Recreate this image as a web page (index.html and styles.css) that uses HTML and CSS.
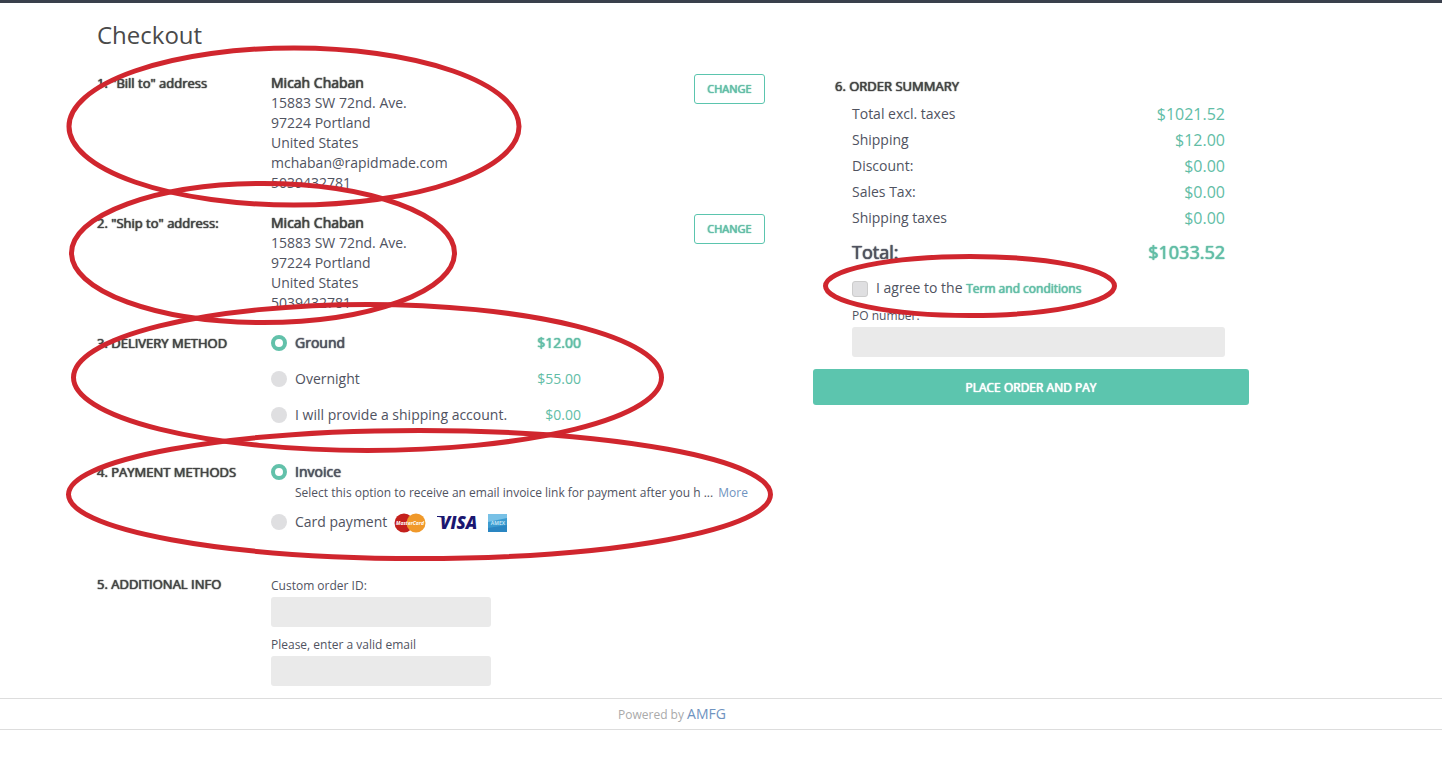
FILE: index.html
```
<!doctype html>
<html lang="en">
<head>
<meta charset="utf-8">
<meta name="viewport" content="width=device-width, initial-scale=1">
<title>Checkout</title>
<link rel="stylesheet" href="styles.css">
</head>

<body>
<form class="wrap">
	<h1>Checkout</h1>
	<div class="columns">
		<div class="steps">
			<section class="step bill">
				<h2>1. "Bill to" address</h2>
				<address>
					<strong>Micah Chaban</strong><br>
					15883 SW 72nd. Ave.<br>
					97224 Portland<br>
					United States<br>
					mchaban@rapidmade.com<br>
					5039432781
				</address>
				<button type="button" class="change">CHANGE</button>
			</section>
			<section class="step ship">
				<h2>2. "Ship to" address:</h2>
				<address>
					<strong>Micah Chaban</strong><br>
					15883 SW 72nd. Ave.<br>
					97224 Portland<br>
					United States<br>
					5039432781
				</address>
				<button type="button" class="change">CHANGE</button>
			</section>
			<section class="step delivery">
				<h2>3. DELIVERY METHOD</h2>
				<div class="options">
					<label class="option active"><input type="radio" name="delivery" checked><span>Ground</span><span class="price">$12.00</span></label>
					<label class="option"><input type="radio" name="delivery"><span>Overnight</span><span class="price">$55.00</span></label>
					<label class="option"><input type="radio" name="delivery"><span>I will provide a shipping account.</span><span class="price">$0.00</span></label>
				</div>
			</section>
			<section class="step payment">
				<h2>4. PAYMENT METHODS</h2>
				<div class="methods">
					<label class="option active"><input type="radio" name="payment" checked><span>Invoice</span></label>
					<p class="note">Select this option to receive an email invoice link for payment after you h ... <a href="#">More</a></p>
					<label class="option">
						<input type="radio" name="payment"><span>Card payment</span>
						<svg class="cards" width="114" height="20" viewBox="0 0 114 20" aria-hidden="true">
							<circle cx="10" cy="11" r="9.5" fill="#c4201c"/>
							<circle cx="22" cy="11" r="9.5" fill="#f0992a"/>
							<text class="mc" x="16" y="13" text-anchor="middle">MasterCard</text>
							<path d="M43 4h6l3 5c-2-3-4-4-9-4z" fill="#1b1670"/>
							<text class="visa" x="46" y="17">VISA</text>
							<rect x="94" y="2" width="19" height="18" fill="#3b9bd0"/>
							<path d="M94 2h19v4L94 10z" fill="#78c1e6"/>
							<path d="M94 20v-4l19-3v7z" fill="#2a86c2"/>
							<text class="amex" x="104" y="13" text-anchor="middle">AMEX</text>
						</svg>
					</label>
				</div>
			</section>
			<section class="step info">
				<h2>5. ADDITIONAL INFO</h2>
				<div class="fields">
					<label for="order-id">Custom order ID:</label>
					<input type="text" id="order-id">
					<label for="email">Please, enter a valid email</label>
					<input type="text" id="email">
				</div>
			</section>
		</div>
		<div class="summary">
			<h2>6. ORDER SUMMARY</h2>
			<div class="details">
				<dl>
					<div><dt>Total excl. taxes</dt><dd>$1021.52</dd></div>
					<div><dt>Shipping</dt><dd>$12.00</dd></div>
					<div><dt>Discount:</dt><dd>$0.00</dd></div>
					<div><dt>Sales Tax:</dt><dd>$0.00</dd></div>
					<div><dt>Shipping taxes</dt><dd>$0.00</dd></div>
					<div class="total"><dt>Total:</dt><dd>$1033.52</dd></div>
				</dl>
				<div class="agree">
					<input type="checkbox" id="agree">
					<label for="agree">I agree to the <a href="#">Term and conditions</a></label>
				</div>
				<div class="fields">
					<label for="po">PO number:</label>
					<input type="text" id="po">
				</div>
			</div>
			<button type="submit" class="pay">PLACE ORDER AND PAY</button>
		</div>
	</div>
</form>
<footer>Powered by <a href="#">AMFG</a></footer>
<!-- red review marks over the form -->
<svg class="marks" width="1442" height="772" viewBox="0 0 1442 772" aria-hidden="true">
	<ellipse cx="294" cy="126.5" rx="225" ry="78.5"/>
	<ellipse cx="263" cy="253" rx="191.5" ry="69.5"/>
	<ellipse cx="367.5" cy="377.5" rx="294" ry="73"/>
	<ellipse cx="419.5" cy="494.5" rx="351" ry="64"/>
	<ellipse cx="970" cy="286" rx="144.5" ry="29.5"/>
</svg>
</body>
</html>
```
FILE: styles.css
```
*{
	box-sizing:border-box;
	}
body{
	margin:0;
	position:relative;
	border-top:3px solid #3a404c;
	background:#fff;
	color:#50535f;
	font:14px/20px "Open Sans", sans-serif;
	}
h1,h2,p,dl,dd{
	margin:0;
	}
a{
	color:#6f93c0;
	text-decoration:none;
	}
button,input{
	font-family:inherit;
	}
.wrap{
	padding:16px 193px 6px 97px;
	}
h1{
	margin-bottom:22px;
	color:#4a4a4a;
	font-size:24px;
	font-weight:400;
	line-height:32px;
	}
h2{
	color:#444;
	font-size:13px;
	font-weight:400;
	line-height:20px;
	}
/* thickens the regular weight without changing its width */
h2,
strong,
.change,
.active,
.total,
.agree a,
.pay{
	text-shadow:0 0 1px, 0 0 1px;
	}
.columns{
	display:grid;
	grid-template-columns:167fr 109fr;
	column-gap:48px;
	}
.step{
	display:grid;
	grid-template-columns:174px 1fr auto;
	align-items:start;
	margin-bottom:20px;
	}
address{
	font-style:normal;
	}
strong{
	color:#444;
	font-weight:400;
	}
.change{
	width:71px;
	height:30px;
	margin-top:1px;
	padding:0 0 2px;
	border:1px solid #5bc5ae;
	border-radius:3px;
	background:#fff;
	color:#62bda6;
	font-size:11px;
	}
.delivery{
	margin-bottom:37px;
	}
.payment{
	margin-bottom:42px;
	}
.options{
	display:grid;
	gap:16px;
	width:310px;
	}
.option{
	display:flex;
	align-items:center;
	height:20px;
	}
.option input{
	appearance:none;
	width:16px;
	height:16px;
	margin:0 8px 0 0;
	border-radius:50%;
	background:#dfdfe1;
	}
.option input:checked{
	border:4px solid #62c1aa;
	background:#fff;
	}
.price{
	margin-left:auto;
	color:#62bda6;
	}
.active .price{
	text-shadow:0 0 1px, 0 0 1px;
	}
.methods{
	grid-column:2 / 4;
	}
.note{
	margin:1px 0 9px;
	padding-left:24px;
	font-size:12px;
	white-space:nowrap;
	}
.note a{
	margin-left:2px;
	}
.cards{
	margin-left:7px;
	overflow:visible;
	}
.mc{
	fill:#fff;
	font:italic bold 5px "Open Sans", sans-serif;
	}
.visa{
	fill:#1b1670;
	font:italic 800 17px "Open Sans", sans-serif;
	}
.amex{
	fill:#bfe3f5;
	font:bold 5px "Open Sans", sans-serif;
	}
.info{
	margin-bottom:0;
	}
.fields label{
	display:block;
	font-size:12px;
	line-height:23px;
	}
.fields input{
	display:block;
	width:100%;
	height:30px;
	padding:0 8px;
	border:0;
	border-radius:3px;
	background:#eaeaea;
	}
.info .fields{
	width:220px;
	}
.info .fields input{
	margin-bottom:6px;
	}
.summary{
	padding-top:3px;
	}
.summary h2{
	padding-left:22px;
	}
.details{
	padding:5px 24px 12px 39px;
	}
dl div{
	display:flex;
	justify-content:space-between;
	line-height:26px;
	}
dd{
	color:#62bda6;
	font-size:16px;
	}
dl .total{
	margin-top:8px;
	font-size:18px;
	}
.total dd{
	font-size:18px;
	text-shadow:0 0 1px, 0 0 1px;
	}
.agree{
	display:flex;
	align-items:center;
	gap:8px;
	margin-top:13px;
	}
.agree input{
	appearance:none;
	width:16px;
	height:16px;
	margin:0;
	border:1px solid #ccc;
	border-radius:3px;
	background:#dfdfe1;
	}
.agree a{
	color:#62bda6;
	font-size:12px;
	}
.details .fields{
	margin-top:5px;
	}
.pay{
	width:100%;
	height:36px;
	border:0;
	border-radius:3px;
	background:#5cc5ae;
	color:#fff;
	font-size:12px;
	}
footer{
	height:32px;
	padding-right:98px;
	border-top:1px solid #ddd;
	border-bottom:1px solid #ddd;
	color:#aaa;
	font-size:12px;
	line-height:30px;
	text-align:center;
	}
footer a{
	font-size:14px;
	}
.marks{
	position:absolute;
	top:-3px;
	left:0;
	fill:none;
	stroke:#d0262e;
	stroke-width:5px;
	pointer-events:none;
	}
```
